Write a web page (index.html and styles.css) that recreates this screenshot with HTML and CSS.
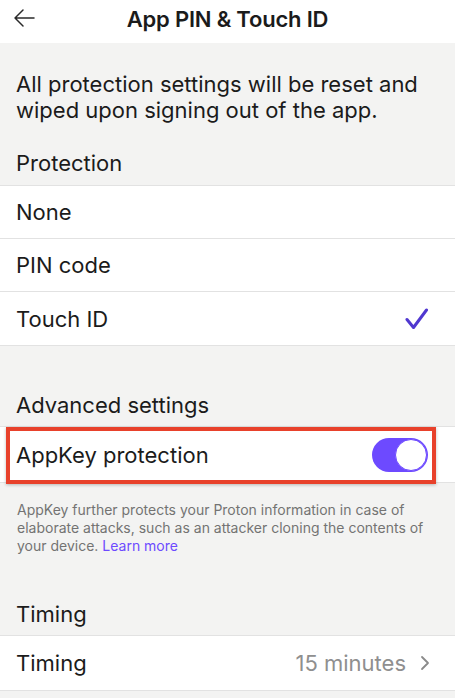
FILE: index.html
```html
<!doctype html>
<html lang="en">
<head>
    <meta charset="utf-8">
    <title>App PIN &amp; Touch ID</title>
    <link rel="stylesheet" href="styles.css">
</head>
<body>
<div class="screen">
    <div class="nav">
        <span class="back">
            <svg width="24" height="20" viewBox="0 0 24 20">
                <path d="M22 10H3M11 2L3 10l8 8" fill="none" stroke="#2a2a2a" stroke-width="1.5" stroke-linecap="round" stroke-linejoin="round"/>
            </svg>
        </span>
        <h1>App PIN &amp; Touch ID</h1>
    </div>

    <p class="intro">All protection settings will be reset and wiped upon signing out of the app.</p>

    <div class="section-title first">Protection</div>
    <ul class="group">
        <li class="row">None</li>
        <li class="row">PIN code</li>
        <li class="row">Touch ID
            <svg class="check" width="24" height="24" viewBox="0 0 24 24">
                <path d="M2 12.5l6.5 8L21.5 3" fill="none" stroke="#5038d0" stroke-width="3" stroke-linecap="round" stroke-linejoin="round"/>
            </svg>
        </li>
    </ul>

    <div class="section-title">Advanced settings</div>
    <ul class="group">
        <li class="row tall">AppKey protection
            <span class="toggle on"><span class="knob"></span></span>
            <span class="highlight"></span>
        </li>
    </ul>
    <p class="note">AppKey further protects your Proton information in case of elaborate attacks, such as an attacker cloning the contents of your device. <a href="#">Learn more</a></p>

    <div class="section-title">Timing</div>
    <ul class="group">
        <li class="row timing">Timing
            <span class="value">15 minutes</span>
            <svg class="chevron" width="10" height="16" viewBox="0 0 10 16">
                <path d="M2 2l6 6-6 6" fill="none" stroke="#8a8a8a" stroke-width="1.8" stroke-linecap="round" stroke-linejoin="round"/>
            </svg>
        </li>
    </ul>
</div>
</body>
</html>
```

FILE: styles.css
```css
* {
    padding: 0;
    margin: 0;
    list-style: none;
    box-sizing: border-box;
}

body {
    background: #f3f3f2;
    font-family: Inter, "Liberation Sans", Arial, sans-serif;
    color: #1b1b1b;
}

.screen {
    width: 455px;
    min-height: 698px;
    background: #f3f3f2;
}

.nav {
    height: 43px;
    background: #fff;
    display: flex;
    align-items: center;
    justify-content: center;
    position: relative;
}

.nav h1 {
    font-size: 22px;
    font-weight: 600;
    letter-spacing: -0.2px;
    margin-top: -6px;
}

.nav .back {
    position: absolute;
    left: 12px;
    top: 8px;
}

.intro {
    font-size: 22px;
    line-height: 26px;
    padding: 28px 16px 0;
}

.section-title {
    font-size: 22px;
    line-height: 26px;
    padding: 46px 16px 8px;
}

.section-title.first {
    padding-top: 27px;
    padding-bottom: 9px;
}

.group {
    background: #fff;
    border-top: 1px solid #e2e2e2;
    border-bottom: 1px solid #e2e2e2;
}

.row {
    height: 53px;
    padding: 0 16px;
    display: flex;
    align-items: center;
    font-size: 22px;
    border-bottom: 1px solid #e2e2e2;
    position: relative;
}

.row:last-child {
    border-bottom: 0;
}

.row .check {
    margin-left: auto;
    margin-right: 10px;
}

.row.tall {
    height: 55px;
}

.toggle {
    margin-left: auto;
    margin-right: 11px;
    width: 56px;
    height: 34px;
    border-radius: 17px;
    background: #6d4aff;
    position: relative;
}

.toggle .knob {
    position: absolute;
    right: 1px;
    top: 1px;
    width: 32px;
    height: 32px;
    border-radius: 50%;
    background: #fff;
    border: 1.5px solid #6d4aff;
}

.highlight {
    position: absolute;
    left: 6px;
    top: 0;
    width: 430px;
    height: 57px;
    border: 4px solid #e8412b;
    box-shadow: 0 1px 3px rgba(0, 0, 0, 0.25);
}

.note {
    font-size: 14px;
    line-height: 18px;
    color: #737373;
    padding: 18px 16px 0 17px;
}

.note a {
    color: #6d4aff;
    text-decoration: none;
}

.row.timing {
    height: 54px;
}

.row .value {
    margin-left: auto;
    color: #8f8f8f;
}

.row .chevron {
    margin-left: 14px;
    margin-right: 9px;
}
```
